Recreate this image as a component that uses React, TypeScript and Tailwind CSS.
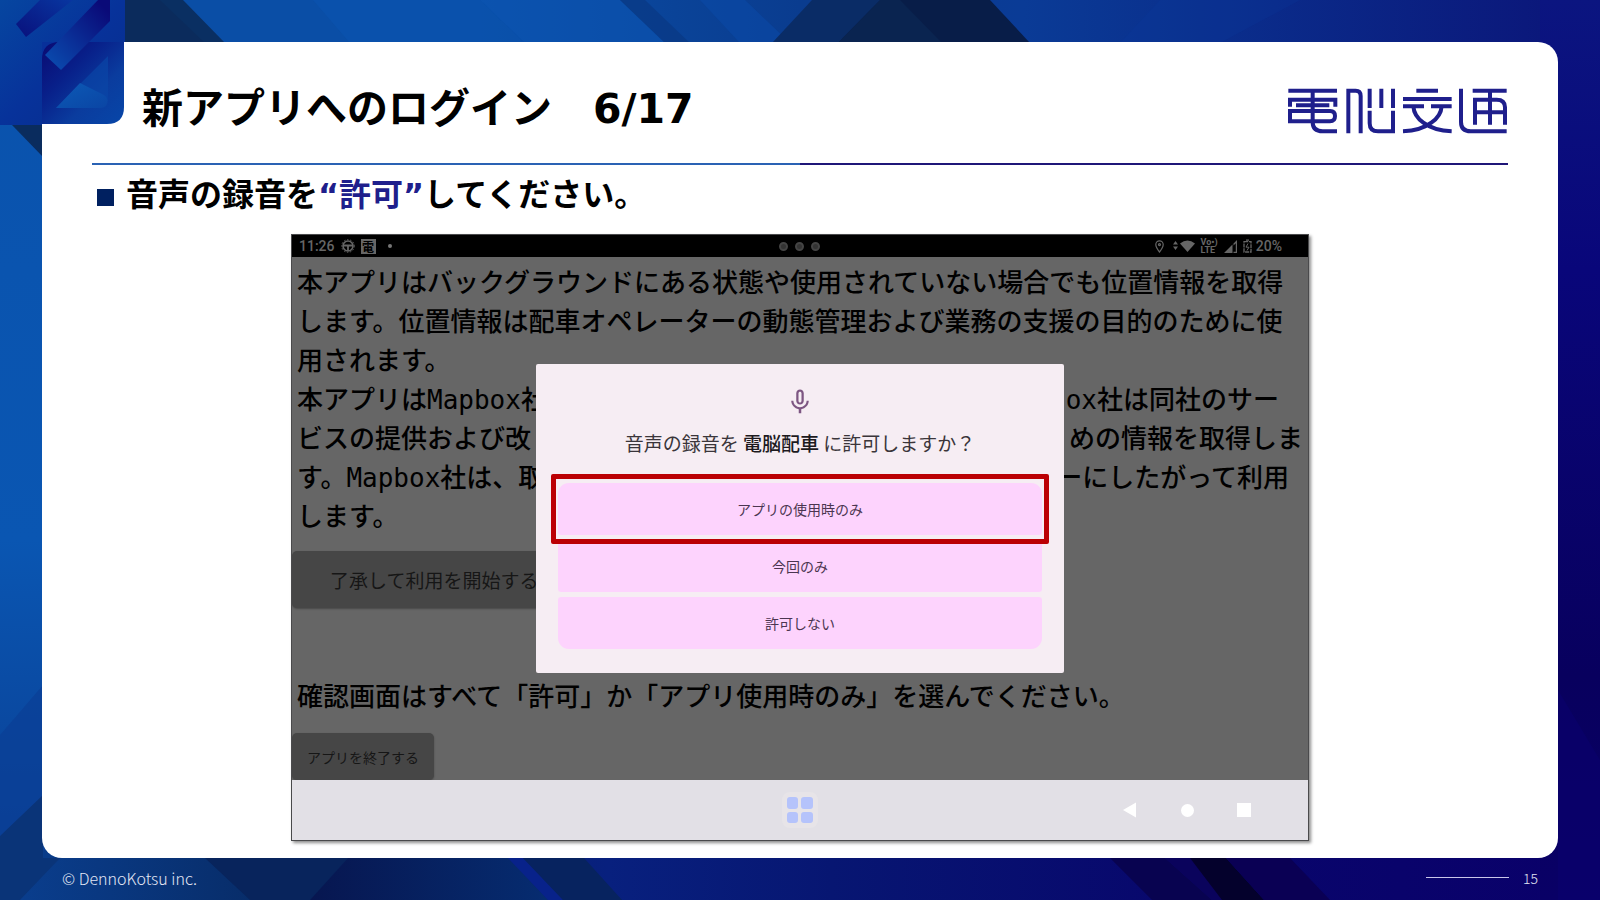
const JP = "font-['Noto_Sans_CJK_JP',sans-serif]";

function Backdrop() {
  return (
    <svg className="absolute inset-0 h-full w-full" viewBox="0 0 1600 900" preserveAspectRatio="none" aria-hidden="true">
      <defs>
        <linearGradient id="base" x1="0" y1="0" x2="1600" y2="700" gradientUnits="userSpaceOnUse">
          <stop offset="0" stopColor="#0a55b0" />
          <stop offset="0.45" stopColor="#09449c" />
          <stop offset="0.7" stopColor="#0a2286" />
          <stop offset="1" stopColor="#090068" />
        </linearGradient>
        <linearGradient id="top" x1="0" y1="0" x2="1600" y2="0" gradientUnits="userSpaceOnUse">
          <stop offset="0" stopColor="#0a4ea6" />
          <stop offset="0.3" stopColor="#0a4ea6" />
          <stop offset="0.5" stopColor="#0a3c8f" />
          <stop offset="0.64" stopColor="#0a3b96" />
          <stop offset="1" stopColor="#0b1478" />
        </linearGradient>
        <linearGradient id="bottom" x1="0" y1="0" x2="1600" y2="0" gradientUnits="userSpaceOnUse">
          <stop offset="0" stopColor="#0a3f90" />
          <stop offset="0.2" stopColor="#07285f" />
          <stop offset="0.38" stopColor="#08207e" />
          <stop offset="0.52" stopColor="#071672" />
          <stop offset="0.75" stopColor="#08066c" />
          <stop offset="1" stopColor="#0a006a" />
        </linearGradient>
        <linearGradient id="right" x1="0" y1="0" x2="0" y2="1">
          <stop offset="0" stopColor="#0b1580" />
          <stop offset="0.3" stopColor="#09067a" />
          <stop offset="0.75" stopColor="#08005e" />
          <stop offset="1" stopColor="#090066" />
        </linearGradient>
        <linearGradient id="left" x1="0" y1="0" x2="0" y2="1">
          <stop offset="0" stopColor="#0a52ac" />
          <stop offset="0.6" stopColor="#0a56b2" />
          <stop offset="1" stopColor="#0a3c90" />
        </linearGradient>
        <linearGradient id="navy" x1="0" y1="0" x2="1" y2="0">
          <stop offset="0" stopColor="#071650" />
          <stop offset="1" stopColor="#062c70" />
        </linearGradient>
      </defs>
      <rect width="1600" height="900" fill="url(#base)" />
      <rect width="60" height="900" fill="url(#left)" />
      <rect width="1600" height="60" fill="url(#top)" />
      <rect y="850" width="1600" height="50" fill="url(#bottom)" />
      <rect x="1540" width="60" height="900" fill="url(#right)" />
      <path d="M125 0H183L225 43H125Z" fill="#0a2f62" />
      <path d="M125 0H160L205 43H125Z" fill="#0b2a58" opacity="0.6" />
      <path d="M313 0H480L525 43H350Z" fill="#0b5ab8" opacity="0.35" />
      <path d="M480 0H620L665 43H525Z" fill="#0b58b8" opacity="0.5" />
      <path d="M620 0H645L690 43H665Z" fill="#093a86" opacity="0.8" />
      <path d="M700 0H745L790 43H740Z" fill="#0a4aa6" opacity="0.6" />
      <path d="M812 0H880L840 43H772Z" fill="#0a2c66" />
      <path d="M880 0H990L1030 43H838Z" fill="#081d48" />
      <path d="M880 0H900L942 43H838Z" fill="#0a2450" />
      <path d="M1160 0H1300L1220 43H1120Z" fill="#0b3aa0" opacity="0.2" />
      <path d="M12 125H43V157Z" fill="#0a2c5e" />
      <path d="M0 735L43 685V800L0 840Z" fill="#0a3f96" opacity="0.7" />
      <path d="M0 836L43 795V858L60 858L20 900H0Z" fill="#0a3478" />
      <path d="M205 858H348L310 900H250Z" fill="#08245c" />
      <path d="M348 858H508L548 900H310Z" fill="url(#navy)" />
      <path d="M508 858H523L563 900H548Z" fill="#08228a" />
      <path d="M523 858H584L622 900H563Z" fill="#07235f" />
      <path d="M1110 858H1165L1212 900H1152Z" fill="#080350" />
      <path d="M1165 858H1190L1235 900H1212Z" fill="#0a035c" />
      <path d="M1190 858H1226L1264 900H1222Z" fill="#04012c" />
      <path d="M1226 858H1290L1330 900H1264Z" fill="#0a0054" />
      <path d="M1558 690L1600 760V900H1558Z" fill="#0a0070" opacity="0.5" />
    </svg>
  );
}

function CornerMark() {
  return (
    <svg className="absolute top-0 left-0 h-[125px] w-[125px]" viewBox="0 0 125 125" aria-hidden="true">
      <defs>
        <linearGradient id="sq" x1="0" y1="0" x2="1" y2="1">
          <stop offset="0" stopColor="#0646a0" />
          <stop offset="0.5" stopColor="#07329a" />
          <stop offset="1" stopColor="#072c8c" />
        </linearGradient>
        <linearGradient id="tile" x1="0" y1="0" x2="1" y2="1">
          <stop offset="0" stopColor="#0a0a72" />
          <stop offset="0.35" stopColor="#08208a" />
          <stop offset="0.65" stopColor="#0a3c9e" />
          <stop offset="1" stopColor="#0746a8" />
        </linearGradient>
        <linearGradient id="bar" x1="1" y1="0" x2="0" y2="1">
          <stop offset="0.1" stopColor="#0a0a78" />
          <stop offset="0.9" stopColor="#0a48ac" />
        </linearGradient>
        <linearGradient id="bar2" x1="1" y1="0" x2="0" y2="1">
          <stop offset="0" stopColor="#0836a0" />
          <stop offset="1" stopColor="#09107c" />
        </linearGradient>
        <linearGradient id="tri" x1="0" y1="0" x2="1" y2="1">
          <stop offset="0" stopColor="#0c5ab6" />
          <stop offset="1" stopColor="#0a45a4" />
        </linearGradient>
      </defs>
      <path d="M0 0H125V42H42V125H0Z" fill="url(#sq)" />
      <path d="M42 42H124V107Q124 124 107 124H42Z" fill="url(#tile)" />
      <path d="M42 60Q42 42 60 42H42Z" fill="#07309a" />
      <path d="M108 56V96Q108 108 97 108H56Z" fill="#0a46a6" opacity="0.7" />
      <path d="M80 83L104 95Q110 99 106 106Q104 108 100 108H56Z" fill="url(#tri)" />
      <path d="M40 0H73L26 37L16 24Z" fill="url(#bar2)" />
      <path d="M98 0H110V21L61 70L45 55Z" fill="url(#bar)" />
    </svg>
  );
}

function BrandLogo() {
  return (
    <svg
      className="mt-[4px] h-[46px] w-[220px]"
      viewBox="86 58 660 138"
      fill="none"
      stroke="#1f1f8c"
      strokeWidth="12"
      role="img"
      aria-label="電脳交通"
    >
      <path d="M87 66H233M92 114V93H228V114M160 66V160Q160 188 190 188H233M110 110H210" />
      <path d="M92 121V158H212Q227 158 227 142Q227 127 212 127H92" />
      <path d="M267 194V66H289Q304 66 304 82V194M331 60V118M366 60V118M401 60V118M331 126V164Q331 188 356 188H401V126" />
      <path d="M471 66H536M431 91H577M431 113H494M515 113H577M462 113Q464 142 492 162Q524 186 577 188M547 113Q545 142 516 162Q484 186 431 188" />
      <path d="M605 60V160Q605 188 634 188H742M640 66H742M647 168V93H712Q737 93 737 116V168M692 66V168M647 131H737" />
    </svg>
  );
}

function StatusBar() {
  return (
    <div className="grid h-[22px] grid-cols-3 items-center bg-black font-[Roboto,sans-serif] text-[14px] leading-[22px] font-medium text-[#666666]">
      <div className="flex items-center pl-[7px]">
        <span>11:26</span>
        <svg className="ml-[6px] h-[14px] w-[14px]" viewBox="0 0 14 14" fill="none" stroke="currentColor" aria-hidden="true">
          <circle cx="7" cy="7" r="5" strokeWidth="1.6" />
          <circle cx="7" cy="7" r="6.3" strokeWidth="1" strokeDasharray="1.5 1.6" />
          <path d="M2 6.5H12M7 6.5V12" strokeWidth="1.8" />
        </svg>
        <span className="ml-[6px] flex h-[15px] w-[15px] items-center justify-center bg-[#666666] font-['Noto_Sans_CJK_JP',sans-serif] text-[12px] leading-[15px] font-bold text-black">
          電
        </span>
        <span className="ml-[12px] h-[4px] w-[4px] rounded-full bg-[#777777]" />
      </div>
      <div className="flex items-center justify-center gap-[7px]">
        <span className="h-[9px] w-[9px] rounded-full border-2 border-[#444444] bg-[#333333]" />
        <span className="h-[9px] w-[9px] rounded-full border-2 border-[#444444] bg-[#333333]" />
        <span className="h-[9px] w-[9px] rounded-full border-2 border-[#444444] bg-[#333333]" />
      </div>
      <div className="flex items-center justify-end pr-[26px]">
        <svg className="h-[13px] w-[9px]" viewBox="0 0 9 13" fill="none" stroke="currentColor" strokeWidth="1.2" aria-hidden="true">
          <path d="M4.5 12Q.8 7.5.8 4.6A3.7 3.7 0 0 1 8.2 4.6Q8.2 7.5 4.5 12Z" />
          <circle cx="4.5" cy="4.6" r="1" />
        </svg>
        <svg className="ml-[9px] h-[14px] w-[22px]" viewBox="0 0 22 14" fill="currentColor" aria-hidden="true">
          <path d="M0 5.5L2.5 2L5 5.5ZM0 7.5H5L2.5 11Z" />
          <path d="M7 4.500Q14.500-1.500 22 4.500L14.500 13Z" />
        </svg>
        <span className="ml-[6px] flex flex-col text-[9px] leading-[8px] font-bold">
          <span>Vo•)</span>
          <span>LTE</span>
        </span>
        <svg className="ml-[6px] h-[13px] w-[13px]" viewBox="0 0 13 13" fill="currentColor" aria-hidden="true">
          <path d="M0 13L8.5 4.5V13ZM9.5 3.5L13 0V13H9.5V11.8H11.8V3.2L9.5 5.5Z" />
        </svg>
        <svg className="ml-[6px] h-[14px] w-[9px]" viewBox="0 0 9 14" fill="none" stroke="currentColor" strokeWidth="1.3" aria-hidden="true">
          <path d="M3 1.2H6M1 2.7H8V13H1Z" strokeDasharray="4 .8" />
          <path d="M5 4.5L3 8.2H6L4 11.5" strokeWidth="1" />
        </svg>
        <span className="ml-[4px]">20%</span>
      </div>
    </div>
  );
}

const option = "block h-[52px] w-full bg-[#fdd3fd] text-[14px] leading-[20px] text-[#4b3550]";

function PermissionDialog() {
  return (
    <div className="absolute inset-0 flex items-center justify-center">
      <div
        role="dialog"
        aria-labelledby="ask"
        className="flex w-[528px] flex-col items-center rounded-[2px] bg-[#f6edf3] px-[22px] pt-[23px] pb-[24px]"
      >
        <svg className="h-[30px] w-[30px]" viewBox="0 0 24 24" fill="#7d5682" aria-hidden="true">
          <path d="M12 14c1.66 0 3-1.34 3-3V5c0-1.66-1.34-3-3-3S9 3.34 9 5v6c0 1.66 1.34 3 3 3zm-1.2-9.1c0-.66.54-1.2 1.2-1.2s1.2.54 1.2 1.2l-.01 6.2c0 .66-.53 1.2-1.19 1.2s-1.2-.54-1.2-1.2V4.9zM17.3 11c0 3-2.54 5.1-5.3 5.1S6.7 14 6.7 11H5c0 3.41 2.72 6.23 6 6.72V21h2v-3.28c3.28-.48 6-3.3 6-6.72h-1.7z" />
        </svg>
        <h2 id="ask" className="mt-[12px] text-[19px] leading-[28px] font-normal whitespace-nowrap text-[#3a353a]">
          音声の録音を <span className="font-medium text-[#1d1a1e]">電脳配車</span> に許可しますか？
        </h2>
        <div className="mt-[26px] flex w-full flex-col gap-[5px]">
          <div className="relative">
            <button type="button" className={`${option} rounded-t-[11px] rounded-b-[3px]`}>アプリの使用時のみ</button>
            <span className="pointer-events-none absolute -inset-x-[7px] -inset-y-[9px] z-10 rounded-[2px] border-[5px] border-[#bb0004]" />
          </div>
          <button type="button" className={`${option} rounded-[3px]`}>今回のみ</button>
          <button type="button" className={`${option} rounded-t-[3px] rounded-b-[11px]`}>許可しない</button>
        </div>
      </div>
    </div>
  );
}

function TabletScreen() {
  return (
    <div className="mx-auto w-full max-w-[1018px] border border-[#4a4a4c] shadow-[2px_2px_3px_rgba(0,0,0,0.45)]">
      <StatusBar />
      <div className="relative overflow-hidden bg-[#666666] pt-[7px] text-black">
        <div className="px-[5px] font-['DejaVu_Sans_Mono','Noto_Sans_CJK_JP',monospace] text-[26px] leading-[39px] font-medium whitespace-nowrap">
          <p>本アプリはバックグラウンドにある状態や使用されていない場合でも位置情報を取得</p>
          <p>します。位置情報は配車オペレーターの動態管理および業務の支援の目的のために使</p>
          <p>用されます。</p>
          <p className="flex justify-between pr-[24px]">
            <span>本アプリはMapbox社</span>
            <span>ox社は同社のサー</span>
          </p>
          <p className="flex justify-between">
            <span>ビスの提供および改</span>
            <span>めの情報を取得しま</span>
          </p>
          <p className="flex justify-between pr-[14px]">
            <span>す。Mapbox社は、取</span>
            <span>ーにしたがって利用</span>
          </p>
          <p>します。</p>
        </div>
        <button type="button" className="mt-[14px] block h-[57px] rounded-[5px] bg-[#464646] px-[38px] text-[19px] leading-[28px] text-[#161616] shadow-[0_1px_2px_rgba(0,0,0,0.3)]">
          了承して利用を開始する
        </button>
        <p className="mt-[67px] pl-[5px] text-[26px] leading-[39px] font-medium whitespace-nowrap">
          確認画面はすべて「許可」か「アプリ使用時のみ」を選んでください。
        </p>
        <button type="button" className="mt-[19px] block h-[47px] rounded-[5px] bg-[#464646] px-[15px] text-[14px] leading-[20px] text-[#161616] shadow-[0_1px_2px_rgba(0,0,0,0.3)]">
          アプリを終了する
        </button>
        <PermissionDialog />
      </div>
      <nav className="grid h-[60px] grid-cols-3 items-center bg-[#e2e0e6]">
        <span />
        <button type="button" aria-label="アプリ一覧" className="grid h-[36px] w-[36px] grid-cols-2 gap-[3px] justify-self-center rounded-[8px] bg-[#e7e4e8] p-[5px]">
          <span className="rounded-[3px] bg-[#b5c3fb]" />
          <span className="rounded-[3px] bg-[#b5c3fb]" />
          <span className="rounded-[3px] bg-[#b5c3fb]" />
          <span className="rounded-[3px] bg-[#b5c3fb]" />
        </button>
        <div className="flex justify-end pr-[35px]">
          <button type="button" aria-label="戻る" className="flex h-[40px] w-[57px] items-center justify-center">
            <svg className="h-[16px] w-[14px]" viewBox="0 0 14 16" fill="#ffffff"><path d="M0 8L13 .5V15.5Z" /></svg>
          </button>
          <button type="button" aria-label="ホーム" className="flex h-[40px] w-[57px] items-center justify-center">
            <span className="h-[13px] w-[13px] rounded-full bg-white" />
          </button>
          <button type="button" aria-label="履歴" className="flex h-[40px] w-[57px] items-center justify-center">
            <span className="h-[14px] w-[14px] bg-white" />
          </button>
        </div>
      </nav>
    </div>
  );
}

export default function App() {
  return (
    <div className={`relative flex min-h-screen flex-col bg-[#0a3c90] ${JP}`}>
      <Backdrop />
      <main className="relative mx-[42px] mt-[42px] flex-1 rounded-[20px] rounded-tl-none bg-white px-[50px] pb-[17px]">
        <header className="flex h-[121px] items-center justify-between pt-[13px] pl-[50px]">
          <h1 className="font-['DejaVu_Sans','Noto_Sans_CJK_JP',sans-serif] text-[41px] leading-[60px] font-bold text-black">
            新アプリへのログイン　6/17
          </h1>
          <BrandLogo />
        </header>
        <div className="flex h-[2px]">
          <span className="flex-1 bg-[#2a62b4]" />
          <span className="flex-1 bg-[#1f1678]" />
        </div>
        <p className="mt-[10px] flex items-center gap-[12px] pl-[5px] font-['DejaVu_Sans','Noto_Sans_CJK_JP',sans-serif] text-[32px] leading-[40px] font-bold text-black">
          <span className="mt-[4px] h-[17px] w-[17px] bg-[#002060]" />
          <span>
            音声の録音を<span className="text-[#1f1f8c]">“許可”</span>してください。
          </span>
        </p>
        <div className="mt-[19px]">
          <TabletScreen />
        </div>
      </main>
      <footer className="relative flex h-[42px] items-center justify-between px-[62px] pb-[3px] leading-[20px] font-light text-[#e2e6f4]">
        <span className="text-[16px]">© DennoKotsu inc.</span>
        <span className="flex items-center gap-[14px] text-[14px]">
          <span className="h-px w-[83px] bg-[#c9c6ea]" />
          <span>15</span>
        </span>
      </footer>
      <CornerMark />
    </div>
  );
}
